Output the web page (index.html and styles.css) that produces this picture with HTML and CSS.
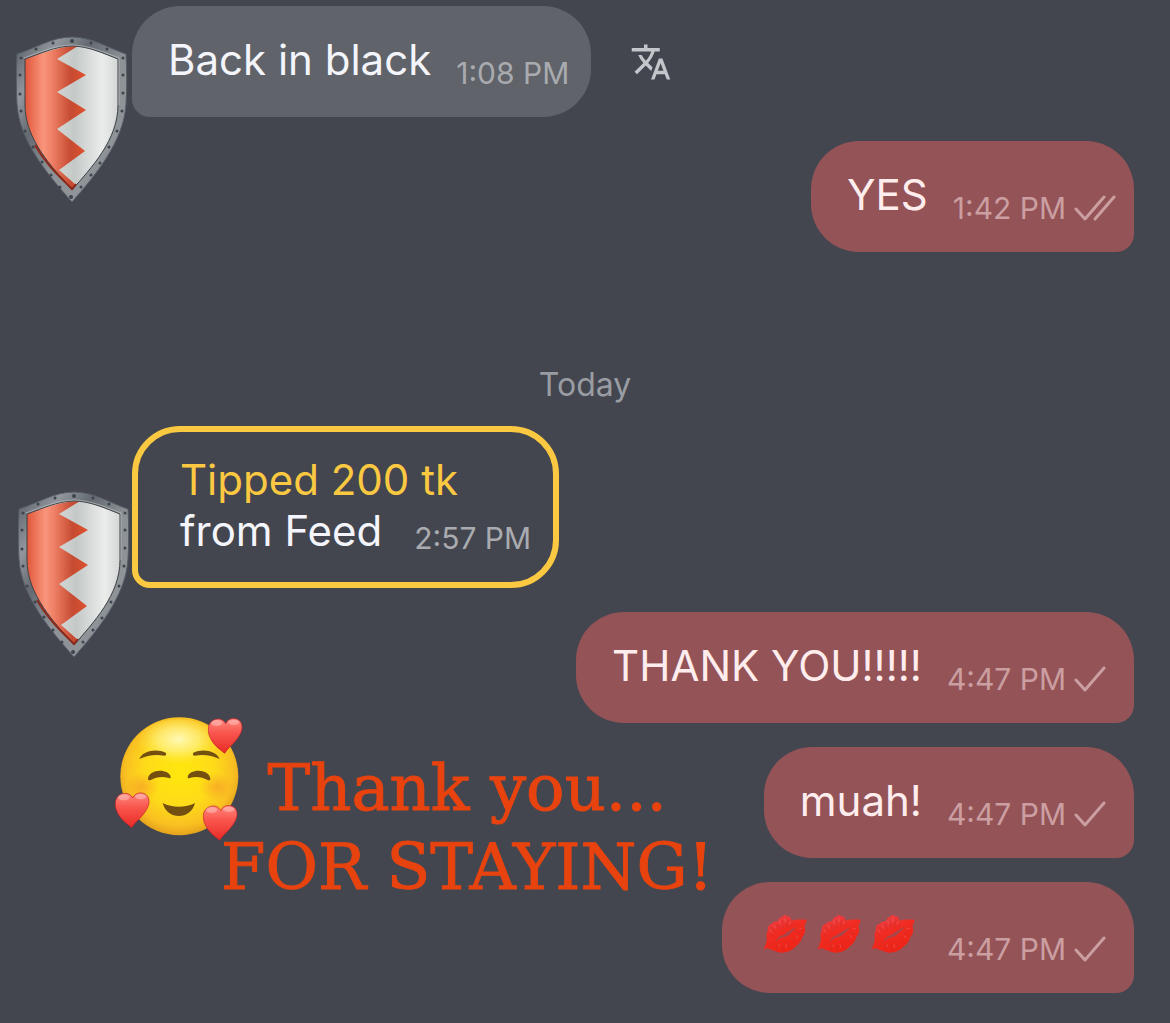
FILE: index.html
```html
<!DOCTYPE html>
<html lang="en">
<head>
  <meta charset="UTF-8">
  <meta name="viewport" content="width=device-width, initial-scale=1.0">
  <title>Messages</title>
  <link rel="stylesheet" href="styles.css">
</head>
<body>
  <!-- Shared drawings -->
  <svg class="defs" width="0" height="0" aria-hidden="true">
    <defs>
      <linearGradient id="steel" x1="0" y1="0" x2="1" y2="1">
        <stop offset="0" stop-color="#555c63"/>
        <stop offset="0.2" stop-color="#90969b"/>
        <stop offset="0.35" stop-color="#646a71"/>
        <stop offset="0.55" stop-color="#8d9297"/>
        <stop offset="0.75" stop-color="#8f9499"/>
        <stop offset="1" stop-color="#50565e"/>
      </linearGradient>
      <linearGradient id="red" gradientUnits="userSpaceOnUse" x1="9" y1="0" x2="70" y2="0">
        <stop offset="0" stop-color="#e2563a"/>
        <stop offset="0.3" stop-color="#f8957b"/>
        <stop offset="0.45" stop-color="#ee7f64"/>
        <stop offset="0.75" stop-color="#c54b32"/>
        <stop offset="1" stop-color="#e0512f"/>
      </linearGradient>
      <linearGradient id="silver" gradientUnits="userSpaceOnUse" x1="40" y1="0" x2="102" y2="0">
        <stop offset="0" stop-color="#d3d6d5"/>
        <stop offset="0.3" stop-color="#c4c9c8"/>
        <stop offset="0.75" stop-color="#ebedeb"/>
        <stop offset="1" stop-color="#d3d6d5"/>
      </linearGradient>
      <radialGradient id="face" gradientUnits="userSpaceOnUse" cx="223" cy="200" r="190">
        <stop offset="0" stop-color="#ffe70c"/>
        <stop offset="0.55" stop-color="#fedb19"/>
        <stop offset="0.85" stop-color="#f9c022"/>
        <stop offset="1" stop-color="#e6a31c"/>
      </radialGradient>
      <radialGradient id="shine" cx="0.5" cy="0.4" r="0.5">
        <stop offset="0" stop-color="#fffbc8" stop-opacity="0.9"/>
        <stop offset="0.5" stop-color="#fff69a" stop-opacity="0.6"/>
        <stop offset="1" stop-color="#ffee50" stop-opacity="0"/>
      </radialGradient>
      <radialGradient id="blush">
        <stop offset="0" stop-color="#f58a2c" stop-opacity="0.5"/>
        <stop offset="1" stop-color="#f58a2c" stop-opacity="0"/>
      </radialGradient>
      <linearGradient id="heartFill" x1="0" y1="0" x2="0" y2="1">
        <stop offset="0" stop-color="#ff8a80"/>
        <stop offset="0.4" stop-color="#f9574f"/>
        <stop offset="1" stop-color="#e92a25"/>
      </linearGradient>
      <linearGradient id="kissFill" x1="0" y1="0" x2="0.5" y2="1">
        <stop offset="0" stop-color="#e94855"/>
        <stop offset="0.5" stop-color="#f02c22"/>
        <stop offset="1" stop-color="#ee2416"/>
      </linearGradient>
      <symbol id="shield" viewBox="0 0 111 167">
        <path fill="url(#steel)" stroke="#565c64" d="M1 18C20 12 36 1 56 1s36 11 54 17c1 17 1 33 0 50-2 38-32 73-54 98C34 141 3 106 1 68 0 51 0 35 1 18z"/>
        <path fill="url(#silver)" d="M9 23C23 18 40 10 56 10s33 8 46 13v46c0 35-27 63-46 85C37 132 9 104 9 69z"/>
        <path fill="url(#red)" d="M9 23C23 18 44 10 62 10L41 23l29 16-29 17 29 18-29 19 28 22-26 19 17 15-4 5C37 132 9 104 9 69z"/>
        <path fill="none" stroke="#3c3f44" d="M9 23C23 18 40 10 56 10s33 8 46 13v46c0 35-27 63-46 85C37 132 9 104 9 69z"/>
        <path fill="none" stroke="#c5c9cc" stroke-opacity="0.6" d="M8 22C22 17 40 9 56 9s34 8 47 13v47"/>
        <path fill="none" stroke="#8a2a1c" stroke-width="2" d="M19 109c10 18 24 31 37 44l4-5"/>
        <g fill="#3e444c">
          <circle cx="56" cy="5" r="2"/><circle cx="37" cy="7" r="1.5"/><circle cx="75" cy="7" r="1.5"/>
          <circle cx="20" cy="13" r="1.5"/><circle cx="91" cy="13" r="1.5"/><circle cx="5" cy="22" r="1.5"/>
          <circle cx="107" cy="22" r="1.5"/><circle cx="4" cy="39" r="1.5"/><circle cx="107" cy="39" r="1.5"/>
          <circle cx="4" cy="58" r="1.5"/><circle cx="107" cy="57" r="1.5"/><circle cx="5" cy="75" r="1.5"/>
          <circle cx="106" cy="75" r="1.5"/><circle cx="9" cy="95" r="1.5"/><circle cx="101" cy="95" r="1.5"/>
          <circle cx="17" cy="111" r="1.5"/><circle cx="93" cy="111" r="1.5"/><circle cx="26" cy="126" r="1.5"/>
          <circle cx="84" cy="127" r="1.5"/><circle cx="35" cy="139" r="1.5"/><circle cx="75" cy="139" r="1.5"/>
          <circle cx="44" cy="151" r="1.5"/><circle cx="65" cy="151" r="1.5"/><circle cx="55" cy="161" r="2"/>
        </g>
      </symbol>
      <symbol id="heart" viewBox="0 0 106 110">
        <path fill="url(#heartFill)" stroke="#c41f26" stroke-width="2" d="M54 18C62-1 88-2 99 13c12 21-4 44-20 62-8 10-20 18-28 32C40 98 27 89 17 76 5 59-3 39 5 20 16 0 45-2 54 18z"/>
        <ellipse cx="27" cy="16" rx="17" ry="9" fill="#fff" fill-opacity="0.3"/>
        <ellipse cx="78" cy="14" rx="16" ry="8" fill="#fff" fill-opacity="0.3"/>
      </symbol>
      <symbol id="kiss" viewBox="3 15 162 150">
        <path fill="url(#kissFill)" d="M18 136c7-12 9-22 12-34-3-9-2-20 3-27-2-9 3-17 12-19 3-5 10-8 18-8 3-7 6-12 12-12 3-8 12-8 16-2 8-1 12 6 12 13 15-5 30-3 46-3-1 8-4 14-7 18 5 12 3 25-5 32-4 15-12 24-22 31-8 9-18 14-28 16-12 4-23 2-32-3-12-2-20-8-26-8-4 0-8 3-11 6z"/>
        <path fill="#a3484c" d="M55 113c6-14 14-22 25-23 11-11 23-16 42-25-13 11-22 18-26 25-10 3-13 8-19 6-8 3-15 8-22 17z"/>
        <g fill="none" stroke="#bd2a30" stroke-width="2" stroke-opacity="0.6">
          <path d="M42 66l12 14M58 56l9 20M75 48l3 22M92 48l-3 20M108 55l-10 12M36 88l14 6M38 118l12-5M58 137l6-20M78 141l1-24M99 133l-6-22M118 113l-13-11M131 84l-16-2"/>
        </g>
        <g fill="none" stroke="#f79095" stroke-width="2" stroke-opacity="0.5">
          <path d="M38 74l8 8M51 60l5 10M68 46l3 12M84 40v12M100 50l-3 8M65 126l3-8M89 128l-2-10M124 98l-8-6M134 70l-8 2"/>
        </g>
      </symbol>
      <symbol id="sent" viewBox="0 0 42 28">
        <path fill="none" stroke="currentColor" stroke-width="3" stroke-linecap="round" stroke-linejoin="round" d="M2 15l9 10L30 3"/>
      </symbol>
      <symbol id="read" viewBox="0 0 42 28">
        <path fill="none" stroke="currentColor" stroke-width="3" stroke-linecap="round" stroke-linejoin="round" d="M2 15l9 10L30 3M21 25L40 3"/>
      </symbol>
    </defs>
  </svg>

  <main class="chat">
    <div class="message">
      <svg class="avatar" role="img" aria-label="Shield"><use href="#shield"/></svg>
      <div class="bubble">
        <p class="text">Back in black</p>
        <div class="meta"><time>1:08 PM</time></div>
      </div>
      <button class="translate" type="button" aria-label="Translate">
        <svg viewBox="0 0 24 24" width="42" height="42" fill="currentColor"><path d="M12.87 15.07l-2.54-2.51.03-.03c1.74-1.94 2.98-4.17 3.71-6.53H17V4h-7V2H8v2H1v1.99h11.17C11.5 7.92 10.44 9.75 9 11.35 8.07 10.32 7.3 9.19 6.69 8h-2c.73 1.63 1.73 3.17 2.98 4.56l-5.09 5.02L4 19l5-5 3.11 3.11.76-2.04zM18.5 10h-2L12 22h2l1.12-3h4.75L21 22h2l-4.5-12zm-2.62 7l1.62-4.33L19.12 17h-3.24z"/></svg>
      </button>
    </div>

    <div class="message mine">
      <div class="bubble">
        <p class="text">YES</p>
        <div class="meta"><time>1:42 PM</time><svg class="check"><use href="#read"/></svg></div>
      </div>
    </div>

    <h2 class="day">Today</h2>

    <div class="message tip-message">
      <svg class="avatar" role="img" aria-label="Shield"><use href="#shield"/></svg>
      <div class="bubble tip">
        <p class="text amount">Tipped 200 tk</p>
        <p class="text">from Feed</p>
        <div class="meta"><time>2:57 PM</time></div>
      </div>
    </div>

    <section class="replies">
      <div class="message mine">
        <div class="bubble">
          <p class="text">THANK YOU!!!!!</p>
          <div class="meta"><time>4:47 PM</time><svg class="check"><use href="#sent"/></svg></div>
        </div>
      </div>
      <div class="message mine">
        <div class="bubble">
          <p class="text">muah!</p>
          <div class="meta"><time>4:47 PM</time><svg class="check"><use href="#sent"/></svg></div>
        </div>
      </div>
      <div class="message mine">
        <div class="bubble">
          <p class="text kisses" role="img" aria-label="Three kisses">
            <svg class="kiss"><use href="#kiss"/></svg>
            <svg class="kiss"><use href="#kiss"/></svg>
            <svg class="kiss"><use href="#kiss"/></svg>
          </p>
          <div class="meta"><time>4:47 PM</time><svg class="check"><use href="#sent"/></svg></div>
        </div>
      </div>

      <!-- Sticker laid over the conversation -->
      <div class="sticker">
        <svg class="smiley" viewBox="0 0 450 420" role="img" aria-label="Smiling face with hearts">
          <circle cx="223" cy="214" r="177" fill="url(#face)"/>
          <ellipse cx="220" cy="118" rx="125" ry="75" fill="url(#shine)"/>
          <ellipse cx="112" cy="245" rx="52" ry="42" fill="url(#blush)"/>
          <ellipse cx="334" cy="245" rx="52" ry="42" fill="url(#blush)"/>
          <g fill="#735010">
            <path d="M103 162c10-24 50-32 79-19 3 4 1 9-4 9-28-4-50-1-75 10z"/>
            <path d="M344 162c-10-24-50-32-79-19-3 4-1 9 4 9 28-4 50-1 75 10z"/>
            <path d="M129 222c2-32 64-32 68-6 0 4-3 5-6 3-18-6-36-4-54 6-4 2-8 1-8-3z"/>
            <path d="M316 222c-2-32-64-32-68-6 0 4 3 5 6 3 18-6 36-4 54 6 4 2 8 1 8-3z"/>
            <path d="M173 294c29 15 68 15 97 0-13 52-84 52-97 0z"/>
          </g>
          <use href="#heart" x="308" y="38" width="106" height="110"/>
          <use href="#heart" x="29" y="261" width="106" height="110"/>
          <use href="#heart" x="293" y="299" width="106" height="110"/>
        </svg>
        <p class="caption">Thank you...<br>FOR STAYING!</p>
      </div>
    </section>
  </main>
</body>
</html>
```
FILE: styles.css
```css
* {
  box-sizing: border-box;
}
body {
  margin: 0;
  background-color: #43464f;
  color: #f4f5fb;
  font-family: Inter, "Liberation Sans", sans-serif;
}
p, h2 {
  margin: 0;
}
.defs {
  position: absolute;
}
.chat {
  display: flex;
  flex-direction: column;
  gap: 24px;
  padding: 6px 36px 30px 132px;
}
.message {
  position: relative;
  display: flex;
  align-items: center;
}
.mine {
  justify-content: flex-end;
}
.bubble {
  display: flex;
  gap: 25px;
  min-height: 111px;
  padding: 28px 22px 26px 36px;
  border-radius: 48px 48px 48px 18px;
  background-color: #606369;
}
.text {
  font-size: 42px;
  line-height: 51px;
  white-space: nowrap;
}
.meta {
  display: flex;
  align-self: flex-end;
  align-items: center;
  gap: 8px;
  color: #a9abaf;
  font-size: 30px;
  line-height: 36px;
  white-space: nowrap;
}
.mine .bubble {
  padding-right: 18px;
  border-radius: 48px 48px 18px 48px;
  background-color: #945357;
  color: #ffedee;
}
.mine .meta {
  color: #cb9fa1;
}
.check {
  width: 42px;
  height: 28px;
}

/* The shield hangs below its bubble */
.avatar {
  position: absolute;
  right: 100%;
  bottom: -86px;
  width: 111px;
  height: 167px;
  margin-right: 5px;
}
.tip-message .avatar {
  bottom: -70px;
  margin-right: 3px;
}
.translate {
  display: flex;
  margin-left: 39px;
  padding: 0;
  border: none;
  background: none;
  color: #c3c6cb;
  cursor: pointer;
}
.day {
  padding: 92px 96px 0 0;
  color: #9a9ca3;
  font-size: 32px;
  font-weight: 400;
  line-height: 34px;
  text-align: center;
}
.tip {
  display: grid;
  grid-template-columns: auto auto;
  gap: 0 32px;
  padding: 22px 22px 26px 42px;
  border: 6px solid #fbc941;
  background: none;
}
.amount {
  grid-column: 1 / -1;
  color: #fbc941;
}
.kisses {
  display: flex;
  padding-right: 2px;
}
.kiss {
  width: 54px;
  height: 50px;
}
.replies {
  position: relative;
  display: flex;
  flex-direction: column;
  gap: 24px;
}
.sticker {
  position: absolute;
  top: 93px;
  left: -27px;
  display: flex;
  align-items: flex-start;
}
.smiley {
  width: 150px;
  height: 140px;
}
.caption {
  margin-left: -34px;
  padding-top: 44px;
  color: #e8430f;
  font-family: "DejaVu Serif", serif;
  font-size: 64px;
  line-height: 79px;
  text-align: center;
  white-space: nowrap;
  -webkit-text-stroke: 1px #e8430f;
}
```
